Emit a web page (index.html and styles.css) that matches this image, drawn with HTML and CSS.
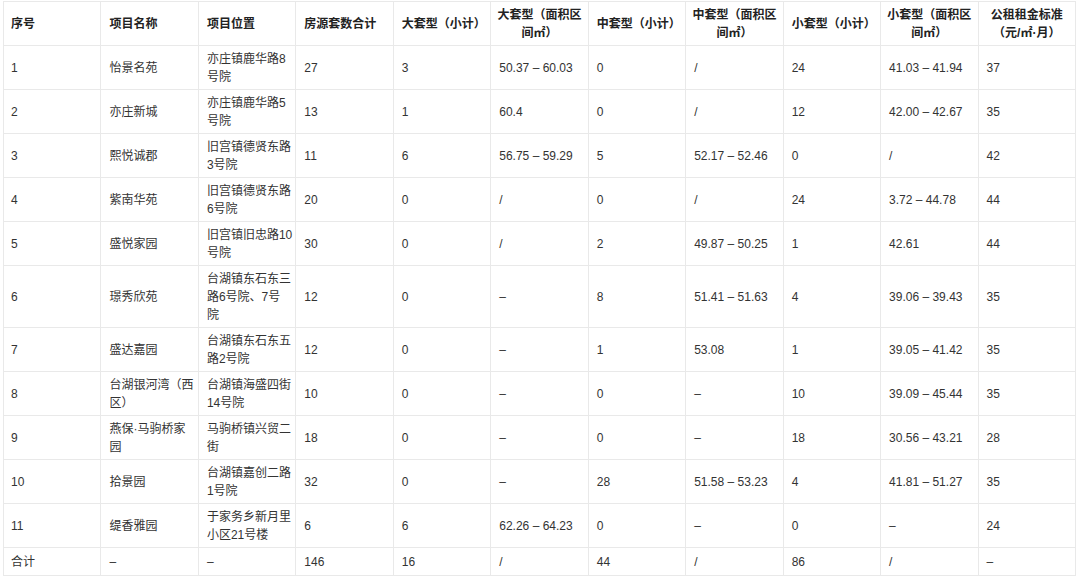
FILE: index.html
```html
<!DOCTYPE html>
<html lang="zh-CN">
<head>
<meta charset="utf-8">
<title>公租房房源表</title>
<link rel="stylesheet" href="styles.css">
</head>
<body>
<table class="grid">
  <thead>
    <tr>
      <th>序号</th>
      <th>项目名称</th>
      <th>项目位置</th>
      <th>房源套数合计</th>
      <th>大套型（小计）</th>
      <th class="center">大套型（面积区<br>间㎡）</th>
      <th>中套型（小计）</th>
      <th class="center">中套型（面积区<br>间㎡）</th>
      <th>小套型（小计）</th>
      <th class="center">小套型（面积区<br>间㎡）</th>
      <th class="center">公租租金标准<br>（元/㎡·月）</th>
    </tr>
  </thead>
  <tbody>
    <tr><td>1</td><td>怡景名苑</td><td>亦庄镇鹿华路8<br>号院</td><td>27</td><td>3</td><td>50.37 – 60.03</td><td>0</td><td>/</td><td>24</td><td>41.03 – 41.94</td><td>37</td></tr>
    <tr><td>2</td><td>亦庄新城</td><td>亦庄镇鹿华路5<br>号院</td><td>13</td><td>1</td><td>60.4</td><td>0</td><td>/</td><td>12</td><td>42.00 – 42.67</td><td>35</td></tr>
    <tr><td>3</td><td>熙悦诚郡</td><td>旧宫镇德贤东路<br>3号院</td><td>11</td><td>6</td><td>56.75 – 59.29</td><td>5</td><td>52.17 – 52.46</td><td>0</td><td>/</td><td>42</td></tr>
    <tr><td>4</td><td>紫南华苑</td><td>旧宫镇德贤东路<br>6号院</td><td>20</td><td>0</td><td>/</td><td>0</td><td>/</td><td>24</td><td>3.72 – 44.78</td><td>44</td></tr>
    <tr><td>5</td><td>盛悦家园</td><td>旧宫镇旧忠路10<br>号院</td><td>30</td><td>0</td><td>/</td><td>2</td><td>49.87 – 50.25</td><td>1</td><td>42.61</td><td>44</td></tr>
    <tr><td>6</td><td>璟秀欣苑</td><td>台湖镇东石东三<br>路6号院、7号<br>院</td><td>12</td><td>0</td><td>–</td><td>8</td><td>51.41 – 51.63</td><td>4</td><td>39.06 – 39.43</td><td>35</td></tr>
    <tr><td>7</td><td>盛达嘉园</td><td>台湖镇东石东五<br>路2号院</td><td>12</td><td>0</td><td>–</td><td>1</td><td>53.08</td><td>1</td><td>39.05 – 41.42</td><td>35</td></tr>
    <tr><td>8</td><td>台湖银河湾（西<br>区）</td><td>台湖镇海盛四街<br>14号院</td><td>10</td><td>0</td><td>–</td><td>0</td><td>–</td><td>10</td><td>39.09 – 45.44</td><td>35</td></tr>
    <tr><td>9</td><td>燕保·马驹桥家<br>园</td><td>马驹桥镇兴贸二<br>街</td><td>18</td><td>0</td><td>–</td><td>0</td><td>–</td><td>18</td><td>30.56 – 43.21</td><td>28</td></tr>
    <tr><td>10</td><td>拾景园</td><td>台湖镇嘉创二路<br>1号院</td><td>32</td><td>0</td><td>–</td><td>28</td><td>51.58 – 53.23</td><td>4</td><td>41.81 – 51.27</td><td>35</td></tr>
    <tr><td>11</td><td>缇香雅园</td><td>于家务乡新月里<br>小区21号楼</td><td>6</td><td>6</td><td>62.26 – 64.23</td><td>0</td><td>–</td><td>0</td><td>–</td><td>24</td></tr>
    <tr class="total"><td>合计</td><td>–</td><td>–</td><td>146</td><td>16</td><td>/</td><td>44</td><td>/</td><td>86</td><td>/</td><td>–</td></tr>
  </tbody>
</table>
</body>
</html>
```

FILE: styles.css
```css
html, body {
  margin: 0;
  padding: 0;
  background: #ffffff;
}

body {
  font-family: "Liberation Sans", "Noto Sans CJK SC", sans-serif;
  font-size: 12px;
  color: #333333;
}

.grid {
  margin: 1px 0 0 3px;
  width: 1073px;
  table-layout: fixed;
  border-collapse: collapse;
}

.grid th,
.grid td {
  border: 1px solid #e9e9e9;
  padding: 3.5px 4px 3.5px 8px;
  line-height: 18px;
  text-align: left;
  vertical-align: middle;
  white-space: nowrap;
  overflow: hidden;
}

.grid th:first-child,
.grid td:first-child {
  padding-left: 7px;
}

.grid th {
  font-weight: 700;
  color: #222222;
  height: 36px;
}

.grid th.center {
  text-align: center;
  padding-left: 4px;
}

.grid td {
  height: 36px;
}

.grid tr.total td {
  height: 20px;
}
```
